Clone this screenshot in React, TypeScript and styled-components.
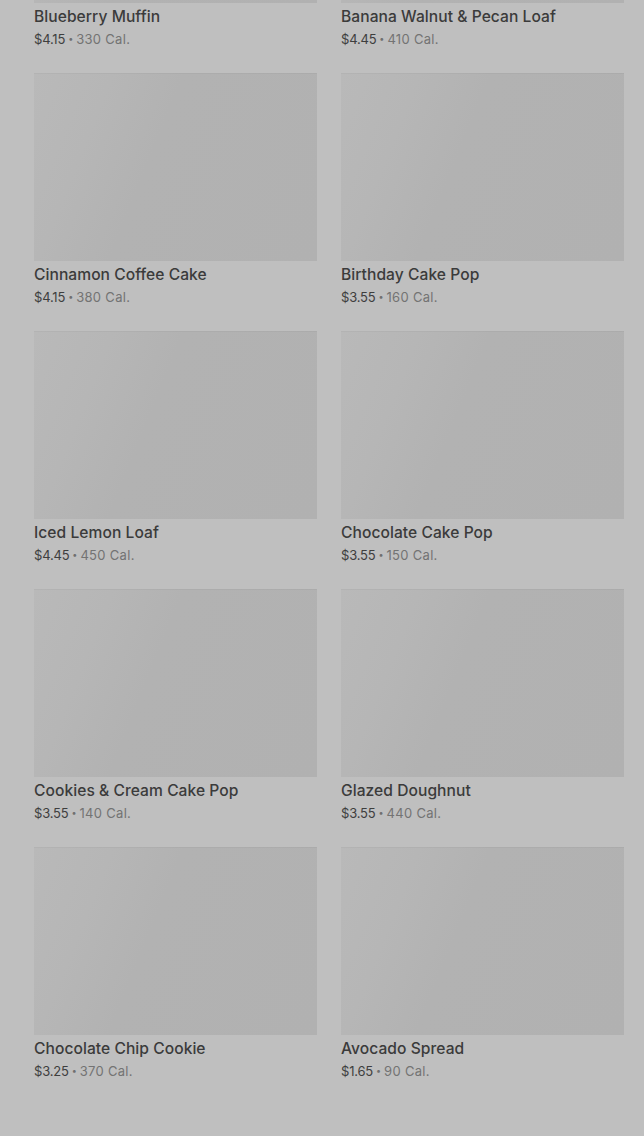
import React from "react";
import styled, { createGlobalStyle } from "styled-components";

const Global = createGlobalStyle`
  html, body {
    margin: 0;
    padding: 0;
    background: #bfbfbf;
    overflow: hidden;
  }
  body {
    font-family: Inter, "Noto Sans", "Liberation Sans", sans-serif;
    -webkit-font-smoothing: antialiased;
  }
`;

const Page = styled.main`
  min-height: 1136px;
  background: #bfbfbf;
  padding: 0 20px 0 34px;
  box-sizing: border-box;
`;

const Grid = styled.ul`
  list-style: none;
  margin: -185px 0 0;
  padding: 0;
  display: grid;
  grid-template-columns: 1fr 1fr;
  column-gap: 24px;
  row-gap: 25px;
`;

const Card = styled.li`
  display: flex;
  flex-direction: column;
`;

const Thumb = styled.div`
  height: 188px;
  background: linear-gradient(112deg, #b9b9b9 0%, #b6b6b6 22%, #b2b2b2 42%, #b1b1b1 100%);
  box-shadow: inset 0 1px 0 rgba(0, 0, 0, 0.03);
`;

const Title = styled.h3`
  margin: 4px 0 0;
  font-size: 15.6px;
  line-height: 20px;
  font-weight: 500;
  color: #3b3b3b;
  letter-spacing: 0.05px;
`;

const Meta = styled.p`
  margin: 3px 0 0;
  font-size: 13px;
  line-height: 18px;
  color: #737373;
  display: flex;
  align-items: center;
`;

const Price = styled.span`
  color: #3e3e3e;
  letter-spacing: -0.2px;
`;

const Dot = styled.span`
  margin: 0 3px;
  font-size: 9px;
  color: #6f6f6f;
`;

const Cal = styled.span`
  letter-spacing: 0.3px;
`;

type Item = { name: string; price: string; cal: number };

const items: Item[] = [
  { name: "Blueberry Muffin", price: "$4.15", cal: 330 },
  { name: "Banana Walnut & Pecan Loaf", price: "$4.45", cal: 410 },
  { name: "Cinnamon Coffee Cake", price: "$4.15", cal: 380 },
  { name: "Birthday Cake Pop", price: "$3.55", cal: 160 },
  { name: "Iced Lemon Loaf", price: "$4.45", cal: 450 },
  { name: "Chocolate Cake Pop", price: "$3.55", cal: 150 },
  { name: "Cookies & Cream Cake Pop", price: "$3.55", cal: 140 },
  { name: "Glazed Doughnut", price: "$3.55", cal: 440 },
  { name: "Chocolate Chip Cookie", price: "$3.25", cal: 370 },
  { name: "Avocado Spread", price: "$1.65", cal: 90 },
];

export default function App() {
  return (
    <>
      <Global />
      <Page>
        <Grid>
          {items.map((it) => (
            <Card key={it.name}>
              <Thumb />
              <Title>{it.name}</Title>
              <Meta>
                <Price>{it.price}</Price>
                <Dot>•</Dot>
                <Cal>{it.cal} Cal.</Cal>
              </Meta>
            </Card>
          ))}
        </Grid>
      </Page>
    </>
  );
}
